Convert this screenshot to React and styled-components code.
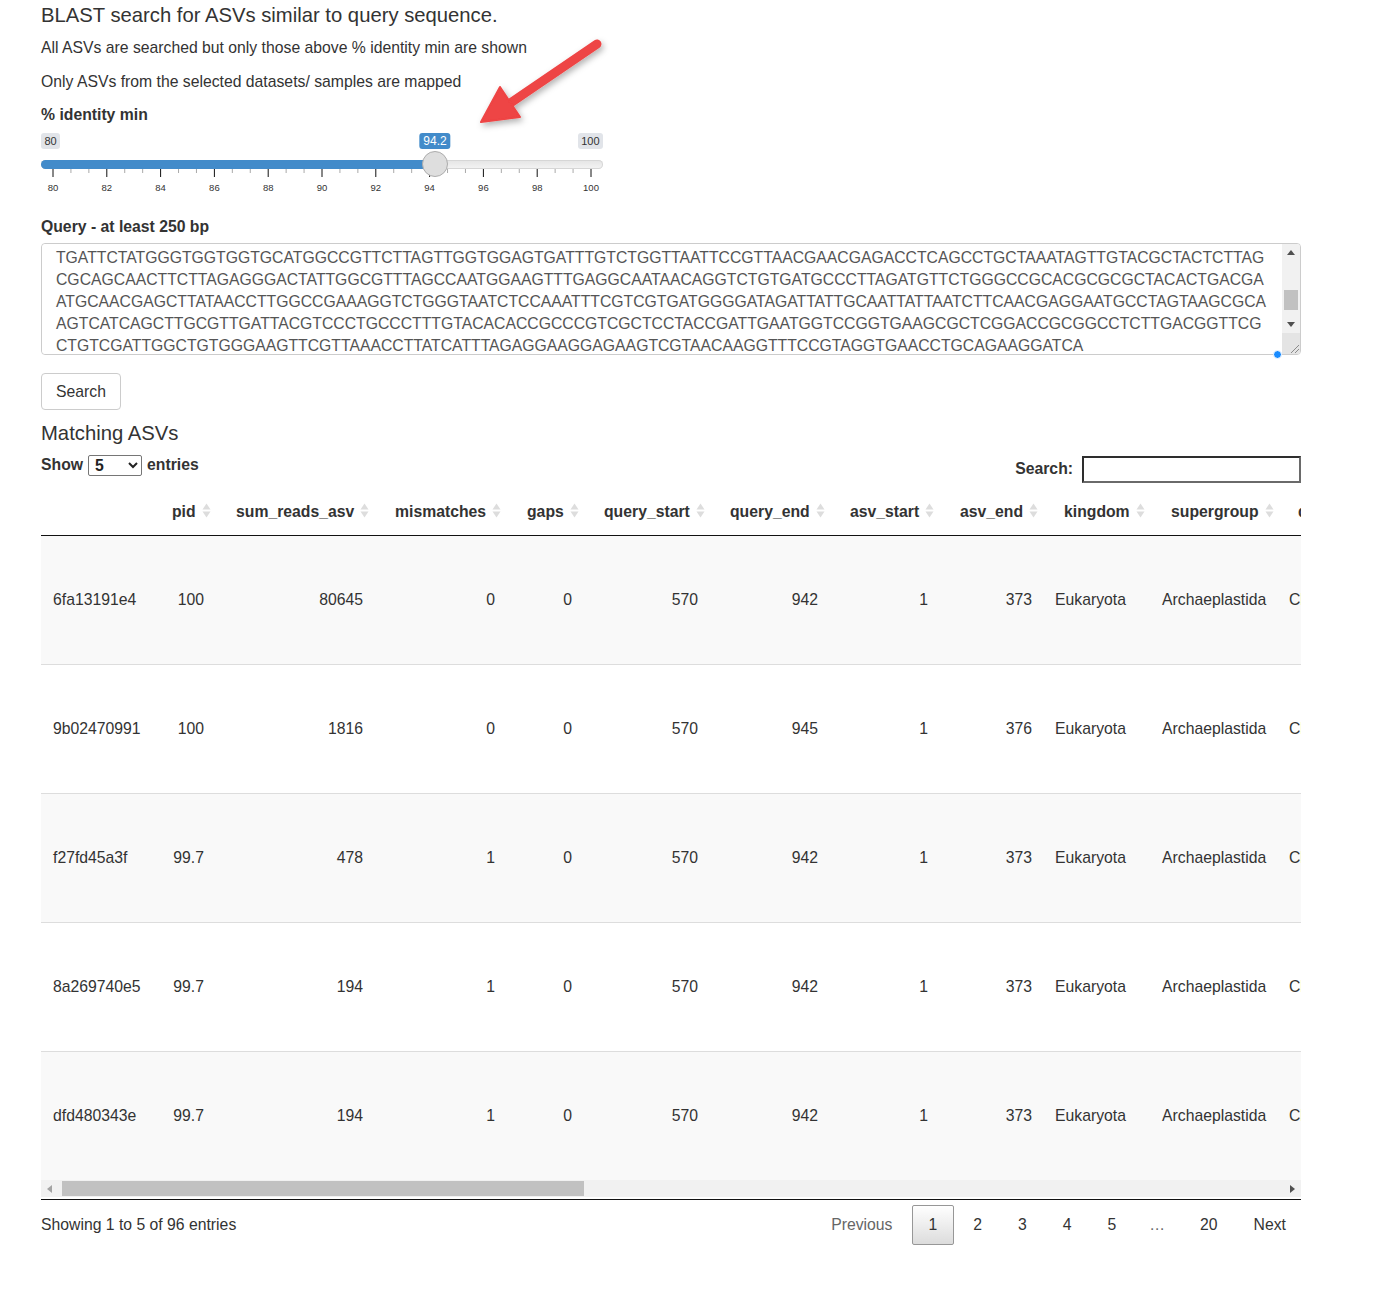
import React from "react";
import styled, { createGlobalStyle } from "styled-components";

const GlobalStyle = createGlobalStyle`
  body {
    margin: 0;
    background: #fff;
    color: #333;
    font-family: "Liberation Sans", Arial, sans-serif;
    font-size: 15.75px;
  }
`;

const Page = styled.div`
  position: relative;
  width: 1260px;
  padding: 0 0 40px 41px;
`;

const Title = styled.h4`
  margin: 0;
  padding-top: 4px;
  font-size: 20.25px;
  font-weight: 400;
  line-height: 22px;
`;

const Text = styled.p`
  margin: ${(p) => p.$top || 11}px 0 0;
  line-height: 22px;
`;

const Label = styled.div`
  margin-top: ${(p) => p.$top || 11}px;
  font-weight: 700;
  line-height: 22px;
`;

const SliderBox = styled.div`
  position: relative;
  width: 562px;
  margin-top: 7px;
`;

const TagRow = styled.div`
  display: flex;
  justify-content: space-between;
  height: 16px;
`;

const Tag = styled.span`
  padding: 0 ${(p) => (p.$value ? 4 : 3.5)}px;
  border-radius: 3px;
  background: ${(p) => (p.$value ? "#428bca" : "#e1e4e9")};
  color: ${(p) => (p.$value ? "#fff" : "#333")};
  font-size: ${(p) => (p.$value ? 12 : 11)}px;
  line-height: 16px;
`;

const ValueTag = styled(Tag)`
  position: absolute;
  top: 0;
  transform: translateX(-50%);
`;

const Track = styled.div`
  margin-top: 11px;
  height: 9px;
  border-radius: 5px;
  background: linear-gradient(#e4e4e4, #f4f4f4);
  box-shadow: inset 0 0 0 1px #d6d6d6;
  overflow: hidden;
`;

const Fill = styled.div`
  height: 100%;
  background: #428bca;
`;

const Handle = styled.div`
  position: absolute;
  top: 18px;
  width: 26px;
  height: 26px;
  margin-left: -13px;
  box-sizing: border-box;
  border-radius: 50%;
  border: 1px solid #acacac;
  background: #dedede;
`;

const TickSvg = styled.svg`
  display: block;
`;

/* query box: textarea plus a drawn classic scrollbar on its right */
const QueryFrame = styled.div`
  position: relative;
  display: flex;
  box-sizing: border-box;
  width: 1260px;
  height: 112px;
  margin-top: 5px;
  border: 1px solid #ccc;
  border-radius: 4px;
`;

const QueryBox = styled.textarea`
  flex: 1;
  min-width: 0;
  margin: 0;
  padding: 3px 14px 0;
  border: none;
  border-radius: 4px 0 0 4px;
  background: #fff;
  font-family: "Liberation Sans", Arial, sans-serif;
  font-size: 15.75px;
  line-height: 22px;
  color: #555;
  white-space: pre;
  overflow: hidden;
  resize: none;
  outline: none;
`;

const VScroll = styled.div`
  display: flex;
  flex-direction: column;
  flex: none;
  width: 18px;
  background: #f1f1f1;
  border-radius: 0 3px 3px 0;
`;

const HScroll = styled.div`
  display: flex;
  height: 17px;
  background: #f1f1f1;
`;

const ScrollButton = styled.div`
  flex: none;
  display: flex;
  align-items: center;
  justify-content: center;
  width: ${(p) => (p.$vertical ? 18 : 17)}px;
  height: 17px;
`;

const Gutter = styled.div`
  flex: 1;
  display: flex;
  flex-direction: ${(p) => (p.$vertical ? "column" : "row")};
  align-items: center;
`;

const Thumb = styled.div`
  flex: none;
  background: #c1c1c1;
  width: ${(p) => (p.$vertical ? "14px" : "auto")};
  height: ${(p) => (p.$vertical ? "auto" : "15px")};
`;

const Resizer = styled.div`
  flex: none;
  display: flex;
  align-items: flex-end;
  justify-content: flex-end;
  height: 21px;
  background: #e4e4e4;
  border-radius: 0 0 3px 0;
`;

const FocusDot = styled.span`
  position: absolute;
  right: 18px;
  bottom: -5px;
  width: 7px;
  height: 7px;
  border-radius: 50%;
  background: #1a8cff;
  border: 1px solid #fff;
`;

const Button = styled.button`
  display: block;
  margin-top: 18px;
  height: 37px;
  padding: 0 14px;
  border: 1px solid #ccc;
  border-radius: 4px;
  background: #fff;
  color: #333;
  font-family: inherit;
  font-size: 15.75px;
`;

const Heading = styled.h4`
  margin: 12px 0 0;
  font-size: 20.25px;
  font-weight: 400;
  line-height: 22px;
`;

const Controls = styled.div`
  display: flex;
  justify-content: space-between;
  align-items: flex-start;
  margin-top: 10px;
  font-weight: 700;
`;

const Length = styled.label`
  display: flex;
  align-items: center;
  gap: 5px;
  line-height: 22px;
`;

const Select = styled.select`
  width: 54px;
  height: 21px;
  padding: 0 2px;
  border: 1px solid #767676;
  border-radius: 2px;
  background: #fff;
  font-family: inherit;
  font-size: 15.75px;
  font-weight: 700;
  color: #222;
`;

const Filter = styled.label`
  display: flex;
  align-items: center;
  gap: 9px;
  height: 28px;
  margin-top: 1px;
`;

const FilterInput = styled.input`
  box-sizing: border-box;
  width: 219px;
  height: 27px;
  border: 2px solid #2e2e2e;
  border-right-color: #6a6a6a;
  border-bottom-color: #6a6a6a;
  outline: none;
`;

const TableFrame = styled.div`
  margin-top: 13px;
  width: 1260px;
  padding-bottom: 2px;
  border-bottom: 1px solid #111;
`;

const ScrollBody = styled.div`
  overflow: hidden;
`;

const Table = styled.table`
  table-layout: fixed;
  border-collapse: separate;
  border-spacing: 0;
`;

const Th = styled.th`
  box-sizing: border-box;
  height: 40px;
  padding: 5px 0 0 11px;
  vertical-align: top;
  text-align: left;
  font-weight: 700;
  line-height: 22px;
  white-space: nowrap;
  border-bottom: 1px solid #111;
`;

const Tr = styled.tr`
  background: ${(p) => (p.$odd ? "#f9f9f9" : "#fff")};
`;

const Td = styled.td`
  box-sizing: border-box;
  height: ${(p) => (p.$first ? 128 : 129)}px;
  padding: ${(p) =>
    p.$align === "right" ? "0 21px 0 0" : p.$lead ? "0 0 0 12px" : "0 0 0 2px"};
  text-align: ${(p) => p.$align};
  line-height: 22px;
  white-space: nowrap;
  overflow: hidden;
  border-top: ${(p) => (p.$first ? "none" : "1px solid #ddd")};
`;

const SortIcon = styled.svg`
  margin-left: 6px;
  vertical-align: -2px;
`;

const Footer = styled.div`
  display: flex;
  justify-content: space-between;
  align-items: center;
  margin-top: 5px;
  line-height: 22px;
`;

const Pager = styled.div`
  display: flex;
  align-items: center;
  margin-right: -2px;
`;

const PageButton = styled.span`
  margin-left: 2px;
  padding: 8px 16px;
  border: 1px solid ${(p) => (p.$current ? "#979797" : "transparent")};
  border-radius: 2px;
  background: ${(p) =>
    p.$current ? "linear-gradient(#fff 0%, #dcdcdc 100%)" : "transparent"};
  color: ${(p) => (p.$disabled ? "#666" : "#333")};
  line-height: 22px;
`;

const Ellipsis = styled.span`
  padding: 0 16px;
  color: #666;
`;

const Arrow = styled.svg`
  position: absolute;
  left: 0;
  top: 0;
  pointer-events: none;
`;

const SEQUENCE = [
  "TGATTCTATGGGTGGTGGTGCATGGCCGTTCTTAGTTGGTGGAGTGATTTGTCTGGTTAATTCCGTTAACGAACGAGACCTCAGCCTGCTAAATAGTTGTACGCTACTCTTAG",
  "CGCAGCAACTTCTTAGAGGGACTATTGGCGTTTAGCCAATGGAAGTTTGAGGCAATAACAGGTCTGTGATGCCCTTAGATGTTCTGGGCCGCACGCGCGCTACACTGACGA",
  "ATGCAACGAGCTTATAACCTTGGCCGAAAGGTCTGGGTAATCTCCAAATTTCGTCGTGATGGGGATAGATTATTGCAATTATTAATCTTCAACGAGGAATGCCTAGTAAGCGCA",
  "AGTCATCAGCTTGCGTTGATTACGTCCCTGCCCTTTGTACACACCGCCCGTCGCTCCTACCGATTGAATGGTCCGGTGAAGCGCTCGGACCGCGGCCTCTTGACGGTTCG",
  "CTGTCGATTGGCTGTGGGAAGTTCGTTAAACCTTATCATTTAGAGGAAGGAGAAGTCGTAACAAGGTTTCCGTAGGTGAACCTGCAGAAGGATCA",
].join("\n");

const columns = [
  { key: "asv", label: "", width: 120, align: "left", lead: true },
  { key: "pid", label: "pid", width: 64, align: "right" },
  { key: "reads", label: "sum_reads_asv", width: 159, align: "right" },
  { key: "mismatches", label: "mismatches", width: 132, align: "right" },
  { key: "gaps", label: "gaps", width: 77, align: "right" },
  { key: "qstart", label: "query_start", width: 126, align: "right" },
  { key: "qend", label: "query_end", width: 120, align: "right" },
  { key: "astart", label: "asv_start", width: 110, align: "right" },
  { key: "aend", label: "asv_end", width: 104, align: "right" },
  { key: "kingdom", label: "kingdom", width: 107, align: "left" },
  { key: "supergroup", label: "supergroup", width: 127, align: "left" },
  { key: "division", label: "division", width: 150, align: "left" },
  { key: "class", label: "class", width: 200, align: "left" },
  { key: "order", label: "order", width: 210, align: "left" },
  { key: "family", label: "family", width: 220, align: "left" },
  { key: "genus", label: "genus", width: 200, align: "left" },
  { key: "species", label: "species", width: 280, align: "left" },
  { key: "length", label: "length", width: 110, align: "right" },
  { key: "evalue", label: "evalue", width: 120, align: "right" },
  { key: "bitscore", label: "bitscore", width: 120, align: "right" },
  { key: "qcovs", label: "qcovs", width: 104, align: "right" },
];
const TABLE_W = columns.reduce((s, c) => s + c.width, 0);
const VIEW_W = 1260;
const H_GUTTER = VIEW_W - 2 * 17;

const taxo = {
  kingdom: "Eukaryota",
  supergroup: "Archaeplastida",
  division: "Chlorophyta",
  class: "Mamiellophyceae",
  order: "Mamiellales",
  family: "Bathycoccaceae",
  genus: "Ostreococcus",
  species: "Ostreococcus_lucimarinus",
};

const rows = [
  { asv: "6fa13191e4", pid: "100", reads: "80645", mismatches: "0", gaps: "0", qstart: "570", qend: "942", astart: "1", aend: "373", length: "373", evalue: "0", bitscore: "689", qcovs: "40" },
  { asv: "9b02470991", pid: "100", reads: "1816", mismatches: "0", gaps: "0", qstart: "570", qend: "945", astart: "1", aend: "376", length: "376", evalue: "0", bitscore: "695", qcovs: "40" },
  { asv: "f27fd45a3f", pid: "99.7", reads: "478", mismatches: "1", gaps: "0", qstart: "570", qend: "942", astart: "1", aend: "373", length: "373", evalue: "0", bitscore: "684", qcovs: "40" },
  { asv: "8a269740e5", pid: "99.7", reads: "194", mismatches: "1", gaps: "0", qstart: "570", qend: "942", astart: "1", aend: "373", length: "373", evalue: "0", bitscore: "684", qcovs: "40" },
  { asv: "dfd480343e", pid: "99.7", reads: "194", mismatches: "1", gaps: "0", qstart: "570", qend: "942", astart: "1", aend: "373", length: "373", evalue: "0", bitscore: "684", qcovs: "40" },
].map((r) => ({ ...taxo, ...r }));

const MIN = 80;
const MAX = 100;
const VALUE = 94.2;
const SLIDER_W = 562;
const INSET = 12;
const toX = (v) => INSET + ((v - MIN) / (MAX - MIN)) * (SLIDER_W - 2 * INSET);

const Ticks = () => {
  const majors = [];
  for (let v = MIN; v <= MAX; v += 2) majors.push(v);
  const minors = [];
  for (let v = MIN; v < MAX; v += 2) minors.push(v + 2 / 3, v + 4 / 3);
  return (
    <TickSvg width={SLIDER_W} height="30">
      {minors.map((v) => (
        <line key={v} x1={toX(v)} x2={toX(v)} y1="0" y2="4" stroke="#aaa" />
      ))}
      {majors.map((v) => (
        <g key={v}>
          <line x1={toX(v)} x2={toX(v)} y1="0" y2="8" stroke="#111" />
          <text
            x={toX(v)}
            y="22"
            textAnchor="middle"
            fontSize="9.5"
            fill="#333"
            fontFamily="Liberation Sans, Arial, sans-serif"
          >
            {v}
          </text>
        </g>
      ))}
    </TickSvg>
  );
};

const Sort = () => (
  <SortIcon width="9" height="17" viewBox="0 0 9 17">
    <path d="M4.5 1.5 L8.5 7.5 L0.5 7.5 Z" fill="#ddd" />
    <path d="M4.5 15.5 L8.5 9.5 L0.5 9.5 Z" fill="#ddd" />
  </SortIcon>
);

const TRIANGLES = {
  up: "M0 5 L4 0 L8 5 Z",
  down: "M0 0 L8 0 L4 5 Z",
  left: "M5 0 L5 8 L0 4 Z",
  right: "M0 0 L5 4 L0 8 Z",
};

const Triangle = ({ dir, color = "#505050" }) => {
  const flat = dir === "up" || dir === "down";
  return (
    <svg width={flat ? 8 : 5} height={flat ? 5 : 8}>
      <path d={TRIANGLES[dir]} fill={color} />
    </svg>
  );
};

const App = () => {
  const handleX = toX(VALUE);
  const thumbW = Math.round((H_GUTTER * VIEW_W) / TABLE_W);

  return (
    <Page>
      <GlobalStyle />
      <Title>BLAST search for ASVs similar to query sequence.</Title>
      <Text>All ASVs are searched but only those above % identity min are shown</Text>
      <Text $top={12}>Only ASVs from the selected datasets/ samples are mapped</Text>
      <Label>% identity min</Label>
      <SliderBox>
        <TagRow>
          <Tag>80</Tag>
          <Tag>100</Tag>
        </TagRow>
        <ValueTag $value style={{ left: handleX }}>
          {VALUE}
        </ValueTag>
        <Track>
          <Fill style={{ width: handleX }} />
        </Track>
        <Handle style={{ left: handleX }} />
        <Ticks />
      </SliderBox>

      <Label $top={17}>Query - at least 250 bp</Label>
      <QueryFrame>
        <QueryBox readOnly defaultValue={SEQUENCE} />
        <VScroll>
          <ScrollButton $vertical>
            <Triangle dir="up" />
          </ScrollButton>
          <Gutter $vertical>
            <Thumb $vertical style={{ marginTop: 29, height: 20 }} />
          </Gutter>
          <ScrollButton $vertical>
            <Triangle dir="down" />
          </ScrollButton>
          <Resizer>
            <svg width="12" height="12">
              <path d="M11 3 L3 11 M11 7 L7 11" stroke="#8a8a8a" strokeWidth="1" />
            </svg>
          </Resizer>
        </VScroll>
        <FocusDot />
      </QueryFrame>
      <Button>Search</Button>

      <Heading>Matching ASVs</Heading>
      <Controls>
        <Length>
          Show
          <Select defaultValue="5">
            <option value="5">5</option>
            <option value="10">10</option>
            <option value="25">25</option>
          </Select>
          entries
        </Length>
        <Filter>
          Search:
          <FilterInput type="search" />
        </Filter>
      </Controls>

      <TableFrame>
        <ScrollBody>
          <Table style={{ width: TABLE_W }}>
            <colgroup>
              {columns.map((c) => (
                <col key={c.key} style={{ width: c.width }} />
              ))}
            </colgroup>
            <thead>
              <tr>
                {columns.map((c) => (
                  <Th key={c.key}>
                    {c.label}
                    {c.label && <Sort />}
                  </Th>
                ))}
              </tr>
            </thead>
            <tbody>
              {rows.map((r, i) => (
                <Tr key={r.asv} $odd={i % 2 === 0}>
                  {columns.map((c) => (
                    <Td key={c.key} $align={c.align} $lead={c.lead} $first={i === 0}>
                      {r[c.key]}
                    </Td>
                  ))}
                </Tr>
              ))}
            </tbody>
          </Table>
        </ScrollBody>
        <HScroll>
          <ScrollButton>
            <Triangle dir="left" color="#a3a3a3" />
          </ScrollButton>
          <Gutter>
            <Thumb style={{ marginLeft: 4, width: thumbW }} />
          </Gutter>
          <ScrollButton>
            <Triangle dir="right" />
          </ScrollButton>
        </HScroll>
      </TableFrame>

      <Footer>
        <span>Showing 1 to 5 of 96 entries</span>
        <Pager>
          <PageButton $disabled>Previous</PageButton>
          <PageButton $current>1</PageButton>
          <PageButton>2</PageButton>
          <PageButton>3</PageButton>
          <PageButton>4</PageButton>
          <PageButton>5</PageButton>
          <Ellipsis>…</Ellipsis>
          <PageButton>20</PageButton>
          <PageButton>Next</PageButton>
        </Pager>
      </Footer>

      <Arrow width="640" height="150">
        <defs>
          <filter id="arrowShadow" x="-20%" y="-20%" width="140%" height="140%">
            <feDropShadow dx="2" dy="3" stdDeviation="3" floodColor="#000" floodOpacity="0.3" />
          </filter>
        </defs>
        <g filter="url(#arrowShadow)" fill="#ee4444" stroke="#ee4444">
          <line x1="597" y1="44" x2="506" y2="106" strokeWidth="9" strokeLinecap="round" />
          <path d="M481 122 L500 87 L520 117 Z" strokeWidth="2" strokeLinejoin="round" />
        </g>
      </Arrow>
    </Page>
  );
};

export default App;
